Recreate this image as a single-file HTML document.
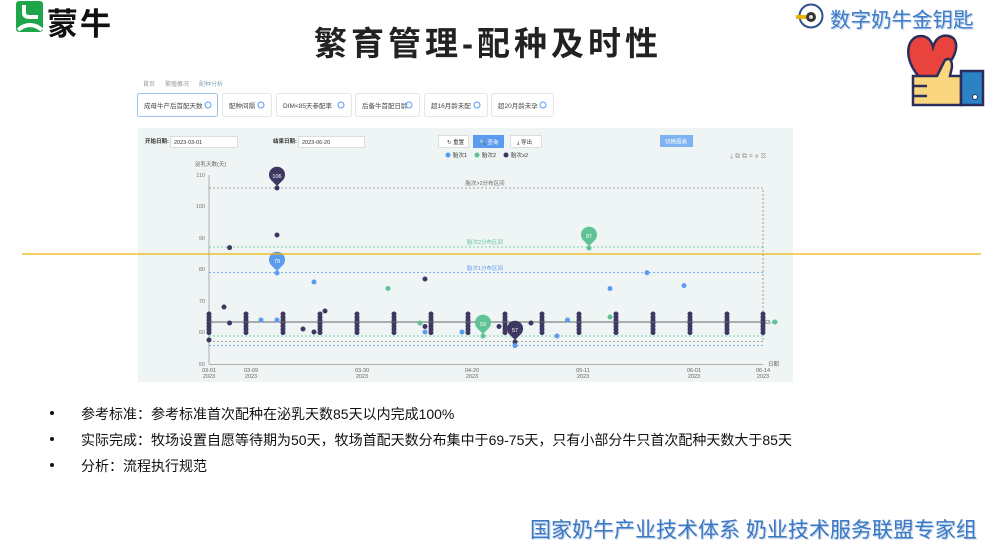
<!DOCTYPE html>
<html><head><meta charset="utf-8"><style>
body{margin:0;width:989px;height:545px;background:#fff;position:relative;overflow:hidden;font-family:"Liberation Sans","Noto Sans CJK SC",sans-serif}
.a{position:absolute;white-space:nowrap}
.title{left:0;width:976px;text-align:center;top:17px;font-size:33px;font-weight:bold;letter-spacing:4px;color:#222}
.b{font-size:14px;color:#111}
.dot{position:absolute;left:50px;width:4px;height:4px;background:#111;border-radius:50%}
</style></head><body>
<svg class="a" style="left:16px;top:1px" width="28" height="32" viewBox="0 0 28 32"><rect x="0" y="0" width="27" height="31" rx="3" fill="#1fa54a"/><path d="M8 4 V12 Q8 16 14 16 H22" stroke="#fff" stroke-width="4" fill="none"/><path d="M2 29 Q14 19 26 29" stroke="#fff" stroke-width="4" fill="none"/></svg>
<div class="a" style="left:47px;top:-1px;font-size:31px;font-weight:bold;color:#111;letter-spacing:2px">蒙牛</div>
<div class="a title">繁育管理-配种及时性</div>
<svg class="a" style="left:795px;top:3px" width="30" height="27"><circle cx="16" cy="13" r="11.5" fill="#fff" stroke="#2f4f8f" stroke-width="2"/><circle cx="16" cy="14" r="5" fill="#333"/><circle cx="16" cy="14" r="2" fill="#ddd"/><rect x="1" y="12" width="10" height="4" fill="#e8b400"/></svg>
<div class="a" style="left:830px;top:3px;font-size:20.5px;color:#3d7cc9;text-shadow:1px 1px 1px #b9cbe6">数字奶牛金钥匙</div>
<svg class="a" style="left:903px;top:30px" width="85" height="78" viewBox="0 0 85 78"><path d="M24 54 C-2 34 2 6 18 6 C26 6 29 13 30 17 C32 10 37 4 46 6 C60 10 54 34 24 54Z" fill="#e8433c" stroke="#2b2d5a" stroke-width="2.5"/><path d="M10 46 H34 L42 30 Q49 26 49 37 L47 46 H58 V75 H10 Z" fill="#fad67e" stroke="#2b2d5a" stroke-width="2.5"/><path d="M10 56 H24 M10 66 H24" stroke="#2b2d5a" stroke-width="2.5"/><rect x="58" y="41" width="22" height="34" fill="#2b82c4" stroke="#2b2d5a" stroke-width="2.5"/><circle cx="72" cy="67" r="2.5" fill="#fff" stroke="#2b2d5a"/></svg>

<div class="a" style="left:143px;top:79px;font-size:6px;color:#999">首页 &nbsp;&nbsp;&nbsp;&nbsp; 繁殖概况 &nbsp;&nbsp;&nbsp;&nbsp; <span style="color:#8ab">配种分析</span></div>
<svg class="a" style="left:0;top:0" width="989" height="545">
<g font-size="6.5" fill="#444" font-family="Liberation Sans,Noto Sans CJK SC,sans-serif">
<rect x="137.5" y="93.5" width="80" height="23" rx="2" fill="#fff" stroke="#9cc2ec"/><text x="144" y="108">成母牛产后首配天数</text><circle cx="208" cy="105" r="3" fill="none" stroke="#5b9bf0"/>
<rect x="222.5" y="93.5" width="49" height="23" rx="2" fill="#fff" stroke="#e6e6e6"/><text x="229" y="108">配种间隔</text><circle cx="261" cy="105" r="3" fill="none" stroke="#5b9bf0"/>
<rect x="276.5" y="93.5" width="75" height="23" rx="2" fill="#fff" stroke="#e6e6e6"/><text x="283" y="108">DIM&lt;85天参配率</text><circle cx="341" cy="105" r="3" fill="none" stroke="#5b9bf0"/>
<rect x="355.5" y="93.5" width="64" height="23" rx="2" fill="#fff" stroke="#e6e6e6"/><text x="362" y="108">后备牛首配日龄</text><circle cx="409" cy="105" r="3" fill="none" stroke="#5b9bf0"/>
<rect x="424.5" y="93.5" width="63" height="23" rx="2" fill="#fff" stroke="#e6e6e6"/><text x="431" y="108">超16月龄未配</text><circle cx="477" cy="105" r="3" fill="none" stroke="#5b9bf0"/>
<rect x="491.5" y="93.5" width="62" height="23" rx="2" fill="#fff" stroke="#e6e6e6"/><text x="498" y="108">超20月龄未孕</text><circle cx="543" cy="105" r="3" fill="none" stroke="#5b9bf0"/>
</g>
<rect x="138" y="128" width="655" height="254" fill="#eff4f4"/>
<g font-size="5.5" fill="#333" font-family="Liberation Sans,Noto Sans CJK SC,sans-serif">
<text x="145" y="143" font-weight="bold">开始日期:</text><rect x="170.5" y="136.5" width="67" height="11" fill="#fff" stroke="#ddd"/><text x="174" y="144">2023-03-01</text>
<text x="273" y="143" font-weight="bold">结束日期:</text><rect x="298.5" y="136.5" width="66" height="11" fill="#fff" stroke="#ddd"/><text x="302" y="144">2023-06-20</text>
<rect x="438.5" y="135.5" width="30" height="12" fill="#fff" stroke="#ddd"/><text x="447" y="144">↻ 重置</text>
<rect x="473" y="135" width="31" height="13" fill="#5b9bf0"/><text x="479" y="144" fill="#fff">🔍 查询</text>
<rect x="510.5" y="135.5" width="31" height="12" fill="#fff" stroke="#ddd"/><text x="517" y="144">⤓ 导出</text>
<rect x="660" y="135" width="33" height="12" fill="#7fb2f0"/><text x="665" y="143.5" fill="#fff">切换图表</text>
<circle cx="448" cy="155" r="2.5" fill="#5b9bf0"/><text x="453" y="157">胎次1</text>
<circle cx="477" cy="155" r="2.5" fill="#5fc495"/><text x="482" y="157">胎次2</text>
<circle cx="506" cy="155" r="2.5" fill="#3d3762"/><text x="511" y="157">胎次≥2</text>
<text x="730" y="158" fill="#999" font-size="7">⤓ ⧉ ⧉ ⌗ ⩔ ☒</text>
<text x="195" y="166" fill="#666">泌乳天数(天)</text>
<g fill="#777" text-anchor="end"><text x="205" y="177">110</text><text x="205" y="208">100</text><text x="205" y="240">90</text><text x="205" y="271">80</text><text x="205" y="303">70</text><text x="205" y="334">60</text><text x="205" y="366">50</text></g>
<g fill="#666" text-anchor="middle"><text x="209" y="372">03-01</text><text x="209" y="378">2023</text><text x="251" y="372">03-09</text><text x="251" y="378">2023</text><text x="362" y="372">03-30</text><text x="362" y="378">2023</text><text x="472" y="372">04-20</text><text x="472" y="378">2023</text><text x="583" y="372">05-11</text><text x="583" y="378">2023</text><text x="694" y="372">06-01</text><text x="694" y="378">2023</text><text x="763" y="372">06-14</text><text x="763" y="378">2023</text></g>
<text x="768" y="366" fill="#666">日期</text>
<text x="485" y="185" fill="#666" text-anchor="middle">胎次&gt;2分布区间</text>
<text x="485" y="244" fill="#5fc495" text-anchor="middle">胎次2分布区间</text>
<text x="485" y="270" fill="#5b9bf0" text-anchor="middle">胎次1分布区间</text>
<text x="764" y="324" fill="#555">63.4</text>
</g>
<line x1="209" y1="175" x2="209" y2="364" stroke="#999" stroke-width="0.8"/>
<line x1="209" y1="364.5" x2="763" y2="364.5" stroke="#999" stroke-width="0.8"/>
<g fill="none" stroke-dasharray="2 2" stroke-width="0.8">
<path d="M209 188 H763 V342" stroke="#888"/>
<line x1="209" y1="247" x2="763" y2="247" stroke="#5fc495"/>
<line x1="209" y1="272.5" x2="763" y2="272.5" stroke="#5b9bf0"/>
<line x1="209" y1="336" x2="763" y2="336" stroke="#5fc495"/>
<line x1="209" y1="341.5" x2="763" y2="341.5" stroke="#888"/>
<line x1="209" y1="345.5" x2="763" y2="345.5" stroke="#5b9bf0"/>
</g>
<g stroke="#3d3762" stroke-width="5" stroke-linecap="round" stroke-dasharray="0 3.1">
<path d="M209 314V333M246 314V333M283 314V333M320 314V333M357 314V333M394 314V333M431 314V333M468 314V333M505 314V333M542 314V333M579 314V333M616 314V333M653 314V333M690 314V333M727 314V333M763 314V333"/>
</g>
<line x1="209" y1="322" x2="763" y2="322" stroke="#666" stroke-width="1"/>
<g fill="#3d3762"><circle cx="229.6" cy="247.6" r="2.5"/><circle cx="224" cy="307" r="2.5"/><circle cx="229.6" cy="323" r="2.5"/><circle cx="277" cy="188" r="2.5"/><circle cx="277" cy="235" r="2.5"/><circle cx="303" cy="329" r="2.5"/><circle cx="314" cy="332" r="2.5"/><circle cx="325" cy="311" r="2.5"/><circle cx="425" cy="279" r="2.5"/><circle cx="425" cy="326.5" r="2.5"/><circle cx="499" cy="326.5" r="2.5"/><circle cx="515" cy="342" r="2.5"/><circle cx="531" cy="323" r="2.5"/><circle cx="209" cy="340" r="2.5"/></g>
<g fill="#5b9bf0"><circle cx="277" cy="273" r="2.5"/><circle cx="261" cy="320" r="2.5"/><circle cx="277" cy="320" r="2.5"/><circle cx="314" cy="282" r="2.5"/><circle cx="425" cy="332" r="2.5"/><circle cx="462" cy="332" r="2.5"/><circle cx="515" cy="345.6" r="2.5"/><circle cx="557" cy="336" r="2.5"/><circle cx="567.5" cy="320" r="2.5"/><circle cx="610" cy="288.5" r="2.5"/><circle cx="647" cy="272.7" r="2.5"/><circle cx="684" cy="285.6" r="2.5"/></g>
<g fill="#5fc495"><circle cx="388" cy="288.5" r="2.5"/><circle cx="420" cy="323" r="2.5"/><circle cx="483" cy="336" r="2.5"/><circle cx="589" cy="248" r="2.5"/><circle cx="610" cy="317" r="2.5"/><circle cx="775" cy="322" r="2.5"/></g>
<g font-size="5.5" fill="#fff" text-anchor="middle" font-family="Liberation Sans,sans-serif">
<path d="M277 186 l-6 -6 a8 8 0 1 1 12 0z" fill="#3d3762"/><text x="277" y="178">106</text>
<path d="M277 271 l-6 -6 a8 8 0 1 1 12 0z" fill="#5b9bf0"/><text x="277" y="263">79</text>
<path d="M589 246 l-6 -6 a8 8 0 1 1 12 0z" fill="#5fc495"/><text x="589" y="238">87</text>
<path d="M483 334 l-6 -6 a8 8 0 1 1 12 0z" fill="#5fc495"/><text x="483" y="326">59</text>
<path d="M515 340 l-6 -6 a8 8 0 1 1 12 0z" fill="#3d3762"/><text x="515" y="332">57</text>
</g>
<line x1="22" y1="254" x2="981" y2="254" stroke="#f0b400" stroke-width="1.3"/>
</svg>

<div class="dot" style="top:411px"></div><div class="a b" style="left:81px;top:404px">参考标准：参考标准首次配种在泌乳天数85天以内完成100%</div>
<div class="dot" style="top:437px"></div><div class="a b" style="left:81px;top:430px">实际完成：牧场设置自愿等待期为50天，牧场首配天数分布集中于69-75天，只有小部分牛只首次配种天数大于85天</div>
<div class="dot" style="top:463px"></div><div class="a b" style="left:81px;top:456px">分析：流程执行规范</div>
<div class="a" style="left:530px;top:514px;font-size:21px;color:#3b78c4;text-shadow:1px 1px 1px #b9cbe6">国家奶牛产业技术体系 奶业技术服务联盟专家组</div>
</body></html>
